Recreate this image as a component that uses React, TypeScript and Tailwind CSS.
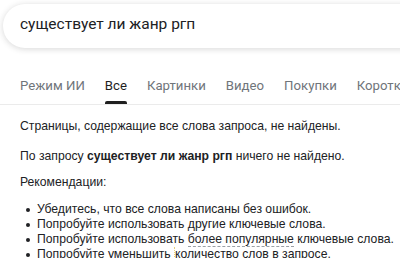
import React from "react";

export default function App() {
  const tabs = ["Режим ИИ", "Все", "Картинки", "Видео", "Покупки", "Короткие видео"];
  const items: React.ReactNode[] = [
    "Убедитесь, что все слова написаны без ошибок.",
    "Попробуйте использовать другие ключевые слова.",
    <>Попробуйте использовать <span className="border-b border-dashed border-[#9aa0a6]">более популярные</span> ключевые слова.</>,
    <>Попробуйте уменьшить <span className="border-l border-dotted border-[#e6d080]">количество</span> слов в запросе.</>,
  ];
  return (
    <div className="w-[400px] h-[258px] overflow-hidden bg-white relative" style={{ fontFamily: "Arial, 'Liberation Sans', sans-serif" }}>
      <div className="pl-[3px] pt-[4px]">
        <div className="h-[44px] w-[460px] rounded-[22px] bg-white shadow-[0_1px_6px_rgba(32,33,36,0.18)] flex items-center pl-[17px]">
          <span className="text-[15.5px] text-[#202124] relative top-[-1px]" style={{ fontFamily: "Roboto, Arial, sans-serif" }}>существует ли жанр ргп</span>
        </div>
      </div>
      <div className="mt-[26px] border-b border-[#ebebeb] flex pl-[20px] gap-[20px] whitespace-nowrap" style={{ fontFamily: "Roboto, Arial, sans-serif" }}>
        {tabs.map((t) => (
          <div key={t} className="relative h-[30px] pt-[2px] flex items-start">
            <span className={"text-[13.2px] " + (t === "Все" ? "text-[#1f1f1f]" : "text-[#70757a]")}>{t}</span>
            {t === "Все" && <div className="absolute left-0 right-0 bottom-[0px] h-[3px] rounded-t-[2px] bg-[#1f1f1f]" />}
          </div>
        ))}
      </div>
      <div className="pl-[20px] pt-[14px] text-[12.2px] text-[#202124] leading-[15px] whitespace-nowrap">
        <p>Страницы, содержащие все слова запроса, не найдены.</p>
        <p className="mt-[15px]">По запросу <b>существует ли жанр ргп</b> ничего не найдено.</p>
        <p className="mt-[11px]">Рекомендации:</p>
        <ul className="mt-[12px]">
          {items.map((it, i) => (
            <li key={i} className="flex items-center h-[15px] pl-[6px]">
              <span className="w-[4px] h-[4px] rounded-full bg-[#202124] mr-[7px] shrink-0" />
              <span>{it}</span>
            </li>
          ))}
        </ul>
      </div>
    </div>
  );
}
